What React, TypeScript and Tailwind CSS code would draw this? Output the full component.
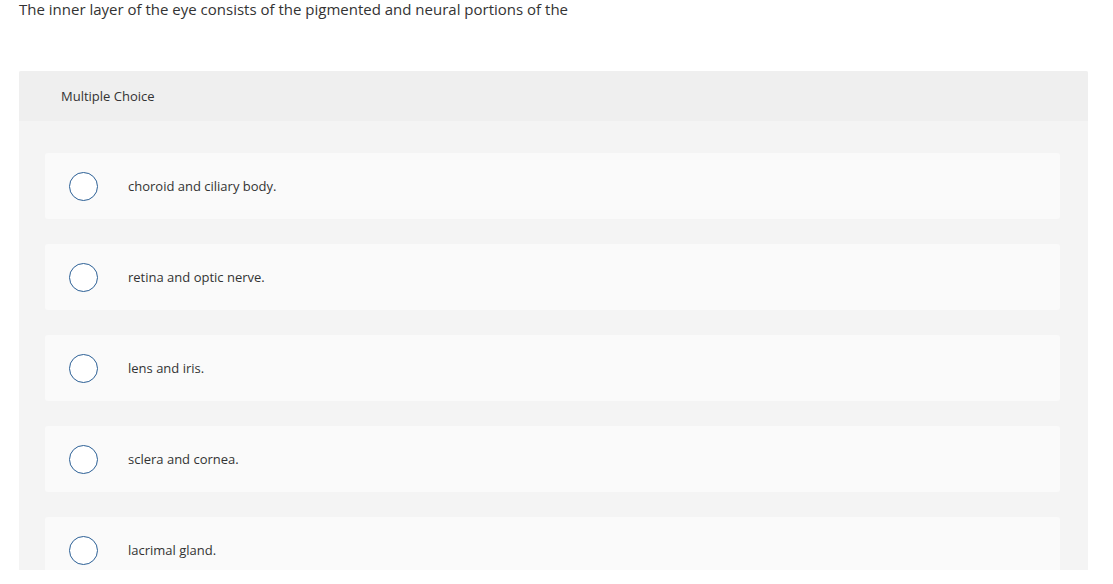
import React from 'react';

const OPTIONS = [
  'choroid and ciliary body.',
  'retina and optic nerve.',
  'lens and iris.',
  'sclera and cornea.',
  'lacrimal gland.',
];

export default function App() {
  return (
    <div className="h-[584px] w-[1113px] overflow-hidden bg-white text-[#333333]" style={{ fontFamily: '"Open Sans", Lato, sans-serif' }}>
      <p className="px-[19px] pt-0 text-[15px] leading-[18px]">
        The inner layer of the eye consists of the pigmented and neural portions of the
      </p>

      <div className="ml-[19px] mt-[53px] h-[499px] w-[1069px] overflow-hidden rounded-t-[2px] bg-[#f4f4f4]">
        <div className="flex h-[50px] items-center bg-[#efefef] pl-[42px] pt-[2px] text-[13px]">
          Multiple Choice
        </div>

        <div className="flex flex-col gap-[25px] pl-[26px] pr-[28px] pt-[32px]">
          {OPTIONS.map((opt) => (
            <label key={opt} className="flex h-[66px] shrink-0 items-center rounded-[3px] bg-[#fafafa] pl-6">
              <span className="h-[29px] w-[29px] shrink-0 rounded-full border-[1.5px] border-[#2b5f95] bg-white" />
              <span className="ml-[30px] pt-[2px] text-[13px]">{opt}</span>
            </label>
          ))}
        </div>
      </div>
    </div>
  );
}
